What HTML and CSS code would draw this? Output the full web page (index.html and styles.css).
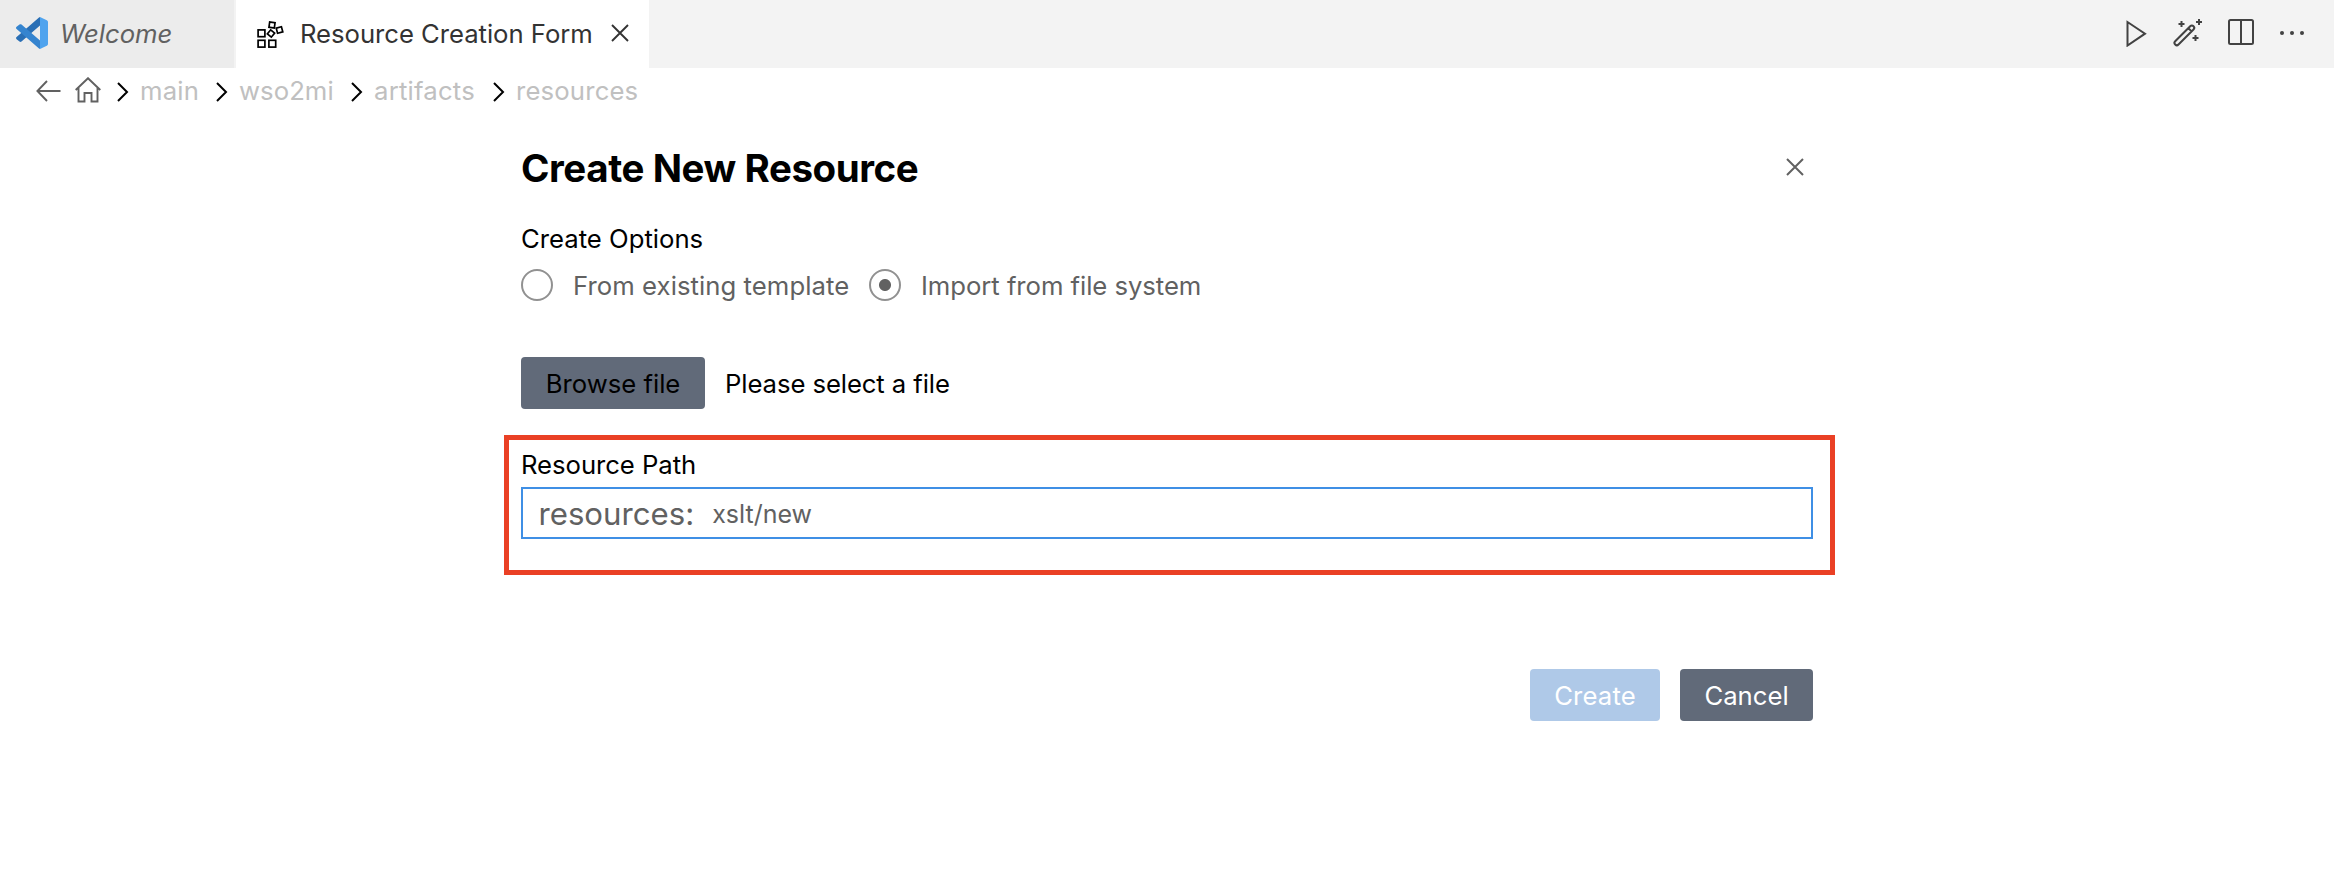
FILE: index.html
```html
<!DOCTYPE html>
<html lang="en">
<head>
<meta charset="utf-8">
<title>Resource Creation Form</title>
<link rel="stylesheet" href="styles.css">
</head>
<body>
<header class="tabbar">
  <div class="tab tab-welcome">
    <svg class="logo" width="32" height="32" viewBox="0 0 32 32">
      <path fill="#2a6fb5" d="M24 0v8.600L5.500 24.600c-.6.5-1.400.5-2 0L.6 22.300c-.8-.7-.8-1.700 0-2.300L23 .5z"/>
      <path fill="#3584cf" d="M24 32v-8.600L5.500 7.500c-.6-.5-1.400-.5-2 0L.6 9.800c-.8.7-.8 1.700 0 2.300L23 31.500z"/>
      <path fill="#4fa3ee" d="M24 0l6.800 3.200c.8.400 1.200 1 1.200 1.800v22c0 .8-.4 1.400-1.200 1.800L24 32z"/>
    </svg>
    <span class="t-welcome">Welcome</span>
  </div>
  <div class="tab tab-active">
    <svg class="blocks" width="28" height="29" viewBox="0 0 28 29" fill="none" stroke="#000" stroke-width="1.700">
      <rect x="2.100" y="9.900" width="6.800" height="6.800"/><rect x="2.100" y="20.300" width="6.800" height="6.800"/><rect x="12.900" y="20.300" width="6.800" height="6.800"/>
      <rect x="13.300" y="2.300" width="5.400" height="5.400" transform="rotate(8 16 5)"/>
      <rect x="20.800" y="7.300" width="5.400" height="5.400" transform="rotate(-15 23.500 10)"/>
      <rect x="12.400" y="10.900" width="5.200" height="5.200" transform="rotate(40 15 13.500)"/>
    </svg>
    <span class="t-form">Resource Creation Form</span>
    <svg class="tab-close" width="18" height="18" viewBox="0 0 18 18" stroke="#333" stroke-width="1.900" fill="none"><path d="M1 1l16 16M17 1L1 17"/></svg>
  </div>
  <div class="actions">
    <svg width="21" height="28" viewBox="0 0 21 28" fill="none" stroke="#424242" stroke-width="2"><path d="M1.500 3v23.500L19 14.700z"/></svg>
    <svg width="30" height="28" viewBox="0 0 30 28" fill="none" stroke="#424242" stroke-width="2"><path d="M2.200 22.200L17.200 7.200a2.200 2.200 0 0 1 3.300 3.300L5.500 25.500a2.200 2.200 0 0 1-3.300-3.300zM15.500 9.300l2.800 2.800M8.500 2v6M5.500 5h6M26 0v6M23 3h6M22.500 16v6M19.500 19h6"/></svg>
    <svg width="26" height="26" viewBox="0 0 26 26" fill="none" stroke="#424242" stroke-width="2"><rect x="1" y="1" width="24" height="24" rx="1.500"/><path d="M13 1v24"/></svg>
    <svg width="24" height="4" viewBox="0 0 24 4" fill="#424242"><circle cx="2" cy="2" r="2"/><circle cx="12" cy="2" r="2"/><circle cx="22" cy="2" r="2"/></svg>
  </div>
</header>
<nav class="crumbs">
  <svg class="back" width="25" height="22" viewBox="0 0 25 22" fill="none" stroke="#616161" stroke-width="1.900"><path d="M11 1L1.400 11 11 21M1.400 11H24.500"/></svg>
  <svg class="home" width="26" height="26" viewBox="0 0 26 26" fill="none" stroke="#616161" stroke-width="1.900"><path d="M.7 13L13 1.200 25.300 13M3.500 10.500V24.500h6V16h7v8.500h6V10.500"/></svg>
  <svg class="chev" width="12" height="20" viewBox="0 0 12 20"><path d="M1 1l9 9-9 9"/></svg>
  <span class="c-main">main</span>
  <svg class="chev" width="12" height="20" viewBox="0 0 12 20"><path d="M1 1l9 9-9 9"/></svg>
  <span class="c-wso">wso2mi</span>
  <svg class="chev" width="12" height="20" viewBox="0 0 12 20"><path d="M1 1l9 9-9 9"/></svg>
  <span class="c-art">artifacts</span>
  <svg class="chev" width="12" height="20" viewBox="0 0 12 20"><path d="M1 1l9 9-9 9"/></svg>
  <span class="c-res">resources</span>
</nav>
<main class="form">
  <div class="heading">
    <h1>Create New Resource</h1>
    <svg class="form-close" width="18" height="18" viewBox="0 0 18 18" stroke="#616161" stroke-width="2" fill="none"><path d="M1 1l16 16M17 1L1 17"/></svg>
  </div>
  <div class="label options-label">Create Options</div>
  <div class="radios">
    <span class="radio"></span><span class="r-template">From existing template</span>
    <span class="radio checked"></span><span class="r-import">Import from file system</span>
  </div>
  <div class="browse-row">
    <button class="btn browse"><span>Browse file</span></button>
    <span class="t-select">Please select a file</span>
  </div>
  <section class="highlight">
    <div class="label path-label">Resource Path</div>
    <div class="input"><span class="prefix">resources:</span><span class="value">xslt/new</span></div>
  </section>
  <div class="footer">
    <button class="btn create"><span>Create</span></button>
    <button class="btn cancel"><span>Cancel</span></button>
  </div>
</main>
</body>
</html>
```
FILE: styles.css
```css
* { box-sizing: border-box; }
body { margin: 0; height: 882px; background: #fff; color: #000; font: 25.7px/32px Inter, "Liberation Sans", sans-serif; white-space: nowrap; overflow: hidden; }
svg { display: block; flex: none; }
span { flex: none; }
.tabbar { display: flex; height: 68px; background: #f3f3f3; }
.tab { display: flex; align-items: center; height: 68px; }
.tab-welcome { width: 236px; padding-left: 16px; background: #ececec; border-right: 2px solid #f3f3f3; color: #616161; font-style: italic; }
.tab-welcome .logo { margin-right: 12px; margin-top: -2px; }
.tab-active { width: 413px; padding-left: 20px; background: #fff; color: #333; }
.blocks { margin-right: 16px; }
.t-form { letter-spacing: -0.04px; }
.tab-close { margin-left: auto; margin-right: 20px; margin-top: -2px; }
.actions { display: flex; align-items: center; margin-left: auto; padding-right: 30px; padding-bottom: 2px; }
.actions svg:nth-child(2) { margin-left: 26px; }
.actions svg:nth-child(3) { margin-left: 25px; margin-top: -2px; }
.actions svg:nth-child(4) { margin-left: 26px; }
.crumbs { display: flex; align-items: center; height: 46px; padding-left: 35.5px; color: #c0c0c0; }
.home { margin-left: 14.5px; margin-top: -2px; }
.chev { fill: none; stroke: #000; stroke-width: 2; margin: 2px 11px 0 16px; }
.c-main { width: 60px; letter-spacing: 0.2px; }
.c-wso { width: 96px; letter-spacing: 0.05px; }
.c-art { width: 103px; letter-spacing: 0.22px; }
.c-res { letter-spacing: 0.17px; }
.form { width: 1292px; margin-left: 521px; }
.heading { display: flex; align-items: center; justify-content: space-between; height: 52px; margin-top: 28px; padding-right: 9px; }
.heading h1 { margin: 0; font-size: 38.5px; line-height: 48px; font-weight: 700; letter-spacing: -0.43px; }
.form-close { margin-top: -2px; }
.options-label { margin-top: 29px; }
.radios { display: flex; align-items: center; height: 32px; margin-top: 14px; color: #616161; }
.radio { width: 32px; height: 32px; border: 2px solid #919191; border-radius: 50%; margin-right: 20px; }
.radio.checked { margin-left: 20px; background: radial-gradient(circle, #616161 5.5px, transparent 6.5px); }
.r-template { width: 276px; padding-top: 2px; letter-spacing: 0.06px; }
.r-import { padding-top: 2px; letter-spacing: -0.05px; }
.browse-row { display: flex; align-items: center; margin-top: 56px; }
.btn { display: flex; align-items: center; justify-content: center; height: 52px; padding: 1px 0 0; border: 0; border-radius: 4px; background: #616a79; color: #fff; font: inherit; }
.browse { width: 184px; color: #000; margin-right: 20px; }
.t-select { padding-top: 1px; letter-spacing: -0.09px; }
.highlight { width: 1331px; height: 140px; margin: 26px 0 0 -17px; padding: 9px 17px 0 12px; border: 5px solid #ea4025; }
.path-label { letter-spacing: -0.05px; }
.input { display: flex; align-items: center; width: 1292px; height: 52px; margin-top: 6px; padding-left: 15.5px; border: 2px solid #3f8fe5; color: #616161; }
.prefix { font-size: 31.2px; margin-right: 18px; padding-top: 1px; }
.value { font-size: 25px; padding-top: 1px; }
.footer { display: flex; justify-content: flex-end; gap: 20px; margin-top: 94px; }
.create { width: 130px; background: #afc9e8; letter-spacing: 0.15px; }
.cancel { width: 133px; }
```
